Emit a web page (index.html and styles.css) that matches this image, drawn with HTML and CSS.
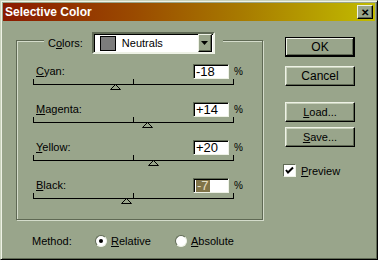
FILE: index.html
```html
<!DOCTYPE html>
<html lang="en">
<head>
  <meta charset="UTF-8">
  <title>Selective Color</title>
  <link rel="stylesheet" href="styles.css">
</head>
<body>
  <div class="window">
    <div class="titlebar">
      <span class="title">Selective Color</span>
      <span class="close">&#x2715;</span>
    </div>

    <div class="content">
      <div class="left">
        <!-- color group -->
        <div class="group">
          <div class="group-head">
            <span class="label">C<u>o</u>lors:</span>
            <div class="select">
              <span class="swatch"></span>
              <span class="select-text">Neutrals</span>
              <span class="select-btn"><svg width="7" height="4" viewBox="0 0 7 4"><polygon points="0,0 7,0 3.5,4" fill="#000"/></svg></span>
            </div>
          </div>

          <div class="rows">
            <div class="row">
              <div class="row-top">
                <span class="label"><u>C</u>yan:</span>
                <span class="field">-18</span>
                <span class="pct">%</span>
              </div>
              <div class="track">
                <svg class="thumb" style="--v:-18" width="11" height="6" viewBox="0 0 11 6"><polygon points="5.5,0.5 0.5,5.5 10.5,5.5" fill="#99a58b" stroke="#000"/></svg>
              </div>
            </div>
            <div class="row">
              <div class="row-top">
                <span class="label"><u>M</u>agenta:</span>
                <span class="field">+14</span>
                <span class="pct">%</span>
              </div>
              <div class="track">
                <svg class="thumb" style="--v:14" width="11" height="6" viewBox="0 0 11 6"><polygon points="5.5,0.5 0.5,5.5 10.5,5.5" fill="#99a58b" stroke="#000"/></svg>
              </div>
            </div>
            <div class="row">
              <div class="row-top">
                <span class="label"><u>Y</u>ellow:</span>
                <span class="field">+20</span>
                <span class="pct">%</span>
              </div>
              <div class="track">
                <svg class="thumb" style="--v:20" width="11" height="6" viewBox="0 0 11 6"><polygon points="5.5,0.5 0.5,5.5 10.5,5.5" fill="#99a58b" stroke="#000"/></svg>
              </div>
            </div>
            <div class="row">
              <div class="row-top">
                <span class="label"><u>B</u>lack:</span>
                <span class="field"><span class="sel">-7</span></span>
                <span class="pct">%</span>
              </div>
              <div class="track">
                <svg class="thumb" style="--v:-7" width="11" height="6" viewBox="0 0 11 6"><polygon points="5.5,0.5 0.5,5.5 10.5,5.5" fill="#99a58b" stroke="#000"/></svg>
              </div>
            </div>
          </div>
        </div>

        <!-- method -->
        <div class="method">
          <span class="method-label">Method:</span>
          <span class="option"><span class="radio checked"></span><span><u>R</u>elative</span></span>
          <span class="option"><span class="radio"></span><span><u>A</u>bsolute</span></span>
        </div>
      </div>

      <div class="right">
        <div class="btn default big">OK</div>
        <div class="btn big gap-cancel">Cancel</div>
        <div class="btn gap-load"><span><u>L</u>oad...</span></div>
        <div class="btn gap-save"><span><u>S</u>ave...</span></div>
        <div class="check-row">
          <span class="checkbox"><svg width="9" height="9" viewBox="0 0 9 9"><polyline points="1,4 3,6.5 8,1.5" fill="none" stroke="#000" stroke-width="2"/></svg></span>
          <span><u>P</u>review</span>
        </div>
      </div>
    </div>
  </div>
</body>
</html>
```

FILE: styles.css
```css
/* base */
body {
  margin: 0;
  font-family: "Liberation Sans", Arial, sans-serif;
  font-size: 11px;
  color: #000;
  background: #99a58b;
}
u {
  text-decoration: underline;
  text-underline-offset: 1px;
}
/* window frame */
.window {
  width: 378px;
  height: 260px;
  box-sizing: border-box;
  padding: 2px;
  border-top: 1px solid #c9d2bc;
  border-left: 1px solid #c9d2bc;
  border-right: 1px solid #000;
  border-bottom: 1px solid #000;
  box-shadow: inset 1px 1px #eef2e6, inset -1px -1px #5f6954;
  background: #99a58b;
}
/* title bar */
.titlebar {
  height: 18px;
  display: flex;
  align-items: center;
  justify-content: space-between;
  padding: 0 2px;
  background: linear-gradient(to right, #8a1a00, #9a4a00 35%, #a87c00 65%, #c2bc00);
}
.title {
  color: #fff;
  font-weight: bold;
  font-size: 12px;
}
.close {
  width: 14px;
  height: 12px;
  display: flex;
  align-items: center;
  justify-content: center;
  font-size: 10px;
  font-weight: bold;
  background: #99a58b;
  border: 1px solid;
  border-color: #eef2e6 #000 #000 #eef2e6;
  box-shadow: inset -1px -1px #5f6954;
}
/* content */
.content {
  display: flex;
  padding: 11px 0 0 13px;
}
.left {
  width: 247px;
}
/* group box */
.group {
  margin-top: 8px;
  border: 1px solid #5f6954;
  box-shadow: inset 1px 1px #d4dccb, 1px 1px #d4dccb;
  padding: 0 0 3px 16px;
  height: 175px;
}
.group-head {
  display: flex;
  align-items: center;
  gap: 9px;
  width: fit-content;
  margin: -9px 0 0 11px;
  padding: 0 8px 0 4px;
  background: #99a58b;
}
.select {
  width: 119px;
  height: 18px;
  display: flex;
  align-items: center;
  background: #fff;
  border: 2px solid;
  border-color: #5f6954 #eef2e6 #eef2e6 #5f6954;
  box-shadow: inset 1px 1px #000;
}
.swatch {
  width: 14px;
  height: 13px;
  margin-left: 6px;
  background: #7c7c7c;
  border: 1px solid #000;
}
.select-text {
  flex: 1;
  margin-left: 6px;
}
.select-btn {
  width: 12px;
  height: 16px;
  display: flex;
  align-items: center;
  justify-content: center;
  background: #99a58b;
  border: 1px solid;
  border-color: #eef2e6 #000 #000 #eef2e6;
  box-shadow: inset -1px -1px #5f6954;
  margin-right: 1px;
}
/* slider rows */
.rows {
  margin-top: 9px;
}
.row {
  height: 38px;
  width: 201px;
}
.row-top {
  height: 16px;
  display: flex;
  align-items: center;
}
.row-top .label {
  flex: 1;
  padding-left: 3px;
}
.field {
  width: 32px;
  height: 12px;
  display: flex;
  align-items: center;
  padding: 1px 0 0 2px;
  margin-right: 5px;
  font-size: 13px;
  background: #fff;
  border: 1px solid;
  border-color: #5f6954 #eef2e6 #eef2e6 #5f6954;
  box-shadow: inset 1px 1px #000;
  line-height: 12px;
}
.sel {
  background: #807448;
  color: #e4dfc4;
  padding: 0 1px;
}
.pct {
  width: 8px;
  margin-right: -8px;
  font-size: 10px;
}
.track {
  position: relative;
  height: 5px;
  border: 1px solid #000;
  border-top: none;
  background: linear-gradient(#000, #000) center / 1px 100% no-repeat;
}
.thumb {
  position: absolute;
  top: 5px;
  left: calc(94px + var(--v) * 1px);
}
/* method row */
.method {
  display: flex;
  align-items: center;
  margin-top: 14px;
  padding-left: 16px;
  height: 13px;
}
.method-label {
  width: 63px;
}
.option {
  width: 80px;
  display: flex;
  align-items: center;
  gap: 4px;
}
.radio {
  width: 10px;
  height: 10px;
  border-radius: 50%;
  background: #fff;
  border: 1px solid;
  border-color: #5f6954 #eef2e6 #eef2e6 #5f6954;
  display: flex;
  align-items: center;
  justify-content: center;
}
.radio.checked::after {
  content: "";
  width: 4px;
  height: 4px;
  border-radius: 50%;
  background: #000;
}
/* right column */
.right {
  margin-left: 22px;
  padding-top: 5px;
}
.btn {
  width: 66px;
  height: 16px;
  display: flex;
  align-items: center;
  justify-content: center;
  border: 1px solid;
  border-color: #eef2e6 #000 #000 #eef2e6;
  box-shadow: inset -1px -1px #5f6954, inset 1px 1px #c9d2bc;
  padding: 1px;
}
.btn.big {
  font-size: 12px;
}
.btn.default {
  border: 1px solid #000;
  box-shadow: inset -1px -1px #000, inset 1px 1px #eef2e6, inset -2px -2px #5f6954;
}
.gap-cancel {
  margin-top: 9px;
}
.gap-load {
  margin-top: 16px;
}
.gap-save {
  margin-top: 5px;
}
.check-row {
  display: flex;
  align-items: center;
  gap: 5px;
  margin: 17px 0 0 -2px;
}
.checkbox {
  width: 11px;
  height: 11px;
  background: #fff;
  border: 1px solid;
  border-color: #5f6954 #eef2e6 #eef2e6 #5f6954;
  display: flex;
  align-items: center;
  justify-content: center;
}
```
